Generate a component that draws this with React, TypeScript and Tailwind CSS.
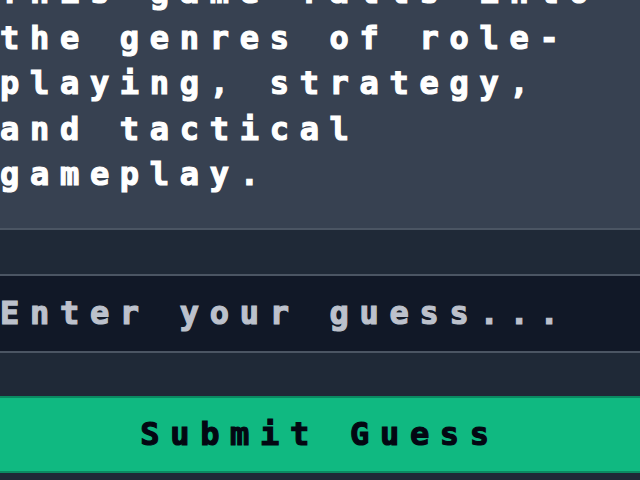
const pixelFont = "font-['DejaVu_Sans_Mono','Liberation_Mono',monospace] font-bold";

export default function App() {
  return (
    <div className="h-[480px] w-[640px] overflow-hidden bg-[#1f2937]">
      {/* clue text, scrolled so the first line is cut off */}
      <section className="border-b-2 border-[#4b5563] bg-[#374151] pb-[30px]">
        <p
          className={`-mt-[30px] text-[32px] leading-[45.5px] tracking-[10.7px] text-white [-webkit-text-stroke:1.2px_#fff] ${pixelFont}`}
        >
          This game falls into the genres of role-playing, strategy, and tactical gameplay.
        </p>
      </section>

      <form className="flex flex-col gap-[43px] pt-[44px]" onSubmit={(e) => e.preventDefault()}>
        <input
          type="text"
          placeholder="Enter your guess..."
          className={`h-[79px] w-full border-y-2 border-[#4b5563] bg-[#111827] px-0 text-[32px] tracking-[10.7px] text-white outline-none placeholder:text-[#bcc1cc] placeholder:[-webkit-text-stroke:1.2px_#bcc1cc] ${pixelFont}`}
        />
        <button
          type="submit"
          className={`h-[77px] w-full border-y-2 border-[#0b8a62] bg-[#10b981] text-[32px] tracking-[10.7px] text-[#030712] [-webkit-text-stroke:1.2px_#030712] ${pixelFont}`}
        >
          Submit Guess
        </button>
      </form>
    </div>
  );
}
